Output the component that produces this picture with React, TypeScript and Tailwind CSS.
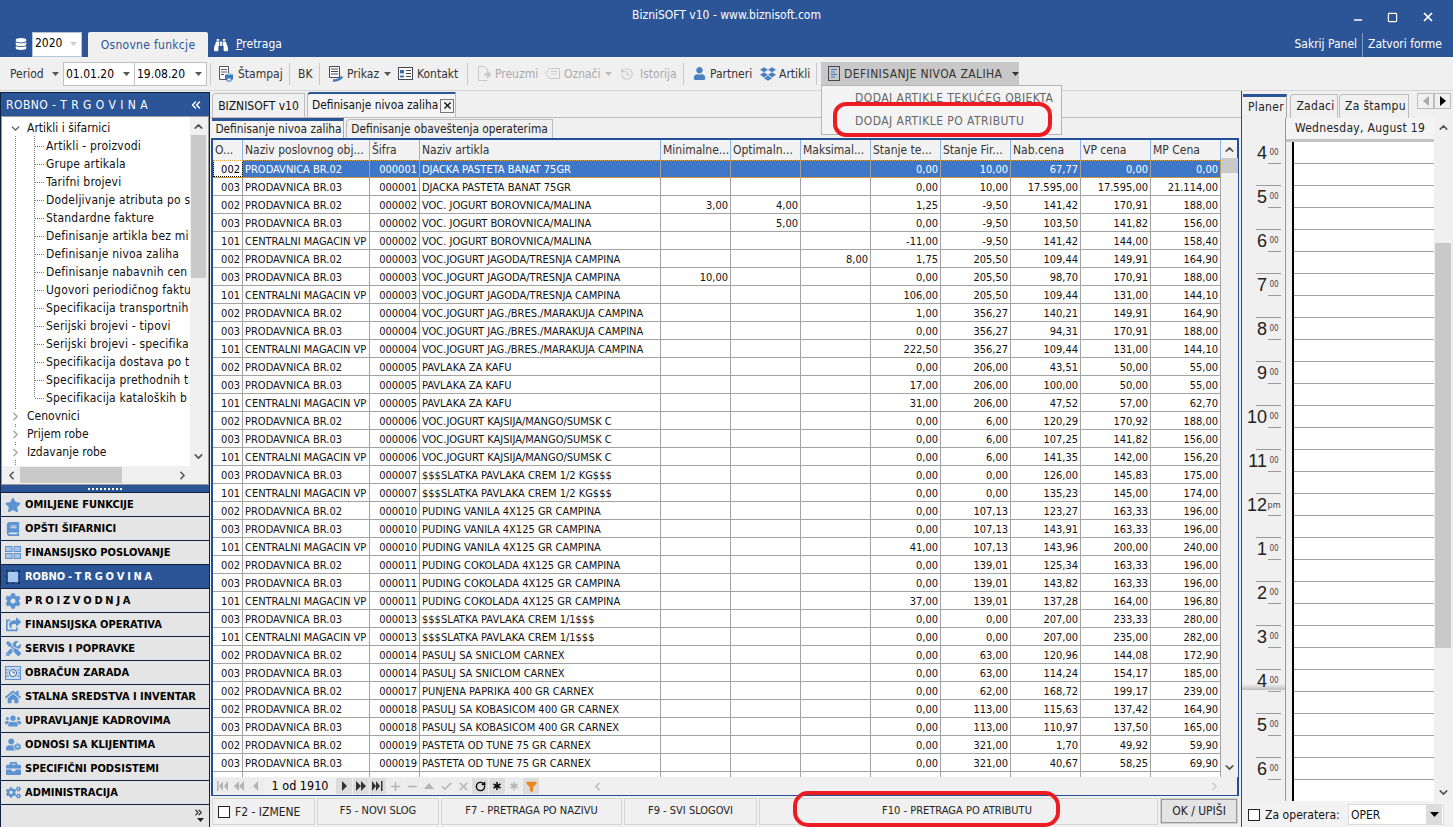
import React from 'react';
import { ChevronDown, ChevronRight, ChevronUp, ChevronLeft, ChevronsLeft, ChevronsRight, Minus, Square, X, History, Plus, Check, RotateCw, Asterisk, Funnel } from 'lucide-react';
import { FaDatabase, FaBinoculars, FaUser, FaDropbox, FaStar, FaBook, FaCog, FaTools, FaHome, FaUsers, FaUserCog, FaBriefcase, FaCogs, FaShareSquare } from 'react-icons/fa';

const W = ['w-[30px]', 'w-[127px]', 'w-[50px]', 'w-[241px]', 'w-[70px]', 'w-[70px]', 'w-[70px]', 'w-[70px]', 'w-[70px]', 'w-[70px]', 'w-[70px]', 'w-[70px]'];
const HEAD = ['O...', 'Naziv poslovnog obj...', 'Šifra', 'Naziv artikla', 'Minimalne...', 'Optimaln...', 'Maksimal...', 'Stanje te...', 'Stanje Fir...', 'Nab.cena', 'VP cena', 'MP Cena'];
const OBJ: Record<string, string> = { '002': 'PRODAVNICA BR.02', '003': 'PRODAVNICA BR.03', '101': 'CENTRALNI MAGACIN VP' };
const A = {
  d: 'DJACKA PASTETA BANAT 75GR', b: 'VOC. JOGURT BOROVNICA/MALINA', j: 'VOC.JOGURT JAGODA/TRESNJA CAMPINA', m: 'VOC.JOGURT JAG./BRES./MARAKUJA CAMPINA',
  p: 'PAVLAKA ZA KAFU', k: 'VOC.JOGURT KAJSIJA/MANGO/SUMSK C', s: '$$$SLATKA PAVLAKA CREM 1/2 KG$$$', v: 'PUDING VANILA 4X125 GR CAMPINA', c: 'PUDING COKOLADA 4X125 GR CAMPINA',
  t: '$$$SLATKA PAVLAKA CREM 1/1$$$', n: 'PASULJ SA SNICLOM CARNEX', r: 'PUNJENA PAPRIKA 400 GR CARNEX', o: 'PASULJ SA KOBASICOM 400 GR CARNEX', u: 'PASTETA OD TUNE 75 GR CARNEX',
};
const ROWS: string[][] = [
  ['002', '000001', A.d, '', '', '', '0,00', '10,00', '67,77', '0,00', '0,00'],
  ['003', '000001', A.d, '', '', '', '0,00', '10,00', '17.595,00', '17.595,00', '21.114,00'],
  ['002', '000002', A.b, '3,00', '4,00', '', '1,25', '-9,50', '141,42', '170,91', '188,00'],
  ['003', '000002', A.b, '', '5,00', '', '0,00', '-9,50', '103,50', '141,82', '156,00'],
  ['101', '000002', A.b, '', '', '', '-11,00', '-9,50', '141,42', '144,00', '158,40'],
  ['002', '000003', A.j, '', '', '8,00', '1,75', '205,50', '109,44', '149,91', '164,90'],
  ['003', '000003', A.j, '10,00', '', '', '0,00', '205,50', '98,70', '170,91', '188,00'],
  ['101', '000003', A.j, '', '', '', '106,00', '205,50', '109,44', '131,00', '144,10'],
  ['002', '000004', A.m, '', '', '', '1,00', '356,27', '140,21', '149,91', '164,90'],
  ['003', '000004', A.m, '', '', '', '0,00', '356,27', '94,31', '170,91', '188,00'],
  ['101', '000004', A.m, '', '', '', '222,50', '356,27', '109,44', '131,00', '144,10'],
  ['002', '000005', A.p, '', '', '', '0,00', '206,00', '43,51', '50,00', '55,00'],
  ['003', '000005', A.p, '', '', '', '17,00', '206,00', '100,00', '50,00', '55,00'],
  ['101', '000005', A.p, '', '', '', '31,00', '206,00', '47,52', '57,00', '62,70'],
  ['002', '000006', A.k, '', '', '', '0,00', '6,00', '120,29', '170,92', '188,00'],
  ['003', '000006', A.k, '', '', '', '0,00', '6,00', '107,25', '141,82', '156,00'],
  ['101', '000006', A.k, '', '', '', '0,00', '6,00', '141,35', '142,00', '156,20'],
  ['003', '000007', A.s, '', '', '', '0,00', '0,00', '126,00', '145,83', '175,00'],
  ['101', '000007', A.s, '', '', '', '0,00', '0,00', '135,23', '145,00', '174,00'],
  ['002', '000010', A.v, '', '', '', '0,00', '107,13', '123,27', '163,33', '196,00'],
  ['003', '000010', A.v, '', '', '', '0,00', '107,13', '143,91', '163,33', '196,00'],
  ['101', '000010', A.v, '', '', '', '41,00', '107,13', '143,96', '200,00', '240,00'],
  ['002', '000011', A.c, '', '', '', '0,00', '139,01', '125,34', '163,33', '196,00'],
  ['003', '000011', A.c, '', '', '', '0,00', '139,01', '143,82', '163,33', '196,00'],
  ['101', '000011', A.c, '', '', '', '37,00', '139,01', '137,28', '164,00', '196,80'],
  ['003', '000013', A.t, '', '', '', '0,00', '0,00', '207,00', '233,33', '280,00'],
  ['101', '000013', A.t, '', '', '', '0,00', '0,00', '207,00', '235,00', '282,00'],
  ['002', '000014', A.n, '', '', '', '0,00', '63,00', '120,96', '144,08', '172,90'],
  ['003', '000014', A.n, '', '', '', '0,00', '63,00', '114,24', '154,17', '185,00'],
  ['002', '000017', A.r, '', '', '', '0,00', '62,00', '168,72', '199,17', '239,00'],
  ['002', '000018', A.o, '', '', '', '0,00', '113,00', '115,63', '137,42', '164,90'],
  ['003', '000018', A.o, '', '', '', '0,00', '113,00', '110,97', '137,50', '165,00'],
  ['002', '000019', A.u, '', '', '', '0,00', '321,00', '1,70', '49,92', '59,90'],
  ['003', '000019', A.u, '', '', '', '0,00', '321,00', '40,67', '58,25', '69,90'],
];

const TREE = ['Artikli - proizvodi', 'Grupe artikala', 'Tarifni brojevi', 'Dodeljivanje atributa po s', 'Standardne fakture', 'Definisanje artikla bez mi', 'Definisanje nivoa zaliha', 'Definisanje nabavnih cen', 'Ugovori periodičnog faktu', 'Specifikacija transportnih', 'Serijski brojevi - tipovi', 'Serijski brojevi - specifika', 'Specifikacija dostava po t', 'Specifikacija prethodnih t', 'Specifikacija kataloških b'];

const BLUE = '#5b93d3';
const GridIcon = () => (
  <svg width="16" height="13" viewBox="0 0 16 13"><g fill="#a9c4e4" stroke="#5b93d3"><rect x=".5" y=".5" width="6.5" height="5" /><rect x="9" y=".5" width="6.5" height="5" /><rect x=".5" y="7.5" width="6.5" height="5" /><rect x="9" y="7.5" width="6.5" height="5" /></g></svg>
);
const PayIcon = () => (
  <svg width="16" height="14" viewBox="0 0 16 14"><rect x=".5" y=".5" width="15" height="13" fill="#c9daf0" stroke="#5b93d3" /><circle cx="8" cy="7" r="3.5" fill="#fff" stroke="#2f5f9e" /><path d="M8 5v2h2" stroke="#2f5f9e" fill="none" /><path d="M1 4h3M1 7h2M1 10h3M12 4h3M13 7h2M12 10h3" stroke="#5b93d3" /></svg>
);
const NAV: [string, React.ReactNode, boolean?][] = [
  ['OMILJENE FUNKCIJE', <FaStar size={16} color={BLUE} />],
  ['OPŠTI ŠIFARNICI', <FaBook size={14} color={BLUE} />],
  ['FINANSIJSKO POSLOVANJE', <GridIcon />],
  ['ROBNO - T R G O V I N A', <div className="w-[14px] h-[14px] border border-dashed border-[#12305f] p-[1px]"><div className="w-full h-full bg-[#a9c8ee]" /></div>, true],
  ['P R O I Z V O D N J A', <FaCog size={16} color={BLUE} />],
  ['FINANSIJSKA OPERATIVA', <FaShareSquare size={15} color={BLUE} />],
  ['SERVIS I POPRAVKE', <FaTools size={15} color={BLUE} />],
  ['OBRAČUN ZARADA', <PayIcon />],
  ['STALNA SREDSTVA I INVENTAR', <FaHome size={16} color={BLUE} />],
  ['UPRAVLJANJE KADROVIMA', <FaUsers size={16} color={BLUE} />],
  ['ODNOSI SA KLIJENTIMA', <FaUserCog size={15} color={BLUE} />],
  ['SPECIFIČNI PODSISTEMI', <FaBriefcase size={15} color={BLUE} />],
  ['ADMINISTRACIJA', <FaCogs size={15} color={BLUE} />],
];

const Sep = () => <div className="w-px h-[22px] bg-[#c8c8c8] shrink-0" />;
const Caret = ({ c = '#555' }: { c?: string }) => <svg width="7" height="4" className="shrink-0"><path d="M0 0h7L3.5 4z" fill={c} /></svg>;

const PrintDoc = () => (
  <svg width="16" height="17" viewBox="0 0 16 17" className="shrink-0"><path d="M1.500 1.500h9v13h-9z" fill="#fff" stroke="#556" /><path d="M3 4.500h6M3 7h6M3 9.500h3" stroke="#556" /><rect x="7" y="9.500" width="8" height="5" fill="#3f78c0" /><rect x="9" y="8" width="4" height="2" fill="#9cc" /><rect x="9" y="13" width="4" height="3" fill="#fff" stroke="#3f78c0" /></svg>
);
const ViewDoc = () => (
  <svg width="15" height="17" viewBox="0 0 15 17" className="shrink-0"><path d="M1.500 1.500h10v11h-10z" fill="#fff" stroke="#445" /><path d="M3 4h7M3 6.500h7M3 9h7" stroke="#445" /><path d="M5 15.500c4 0 7-.5 9-4" fill="none" stroke="#3f78c0" strokeWidth="2.500" /></svg>
);
const Card = () => (
  <svg width="15" height="13" viewBox="0 0 15 13" className="shrink-0"><rect x=".5" y=".5" width="14" height="12" fill="#fff" stroke="#445" /><rect x="2" y="3" width="4" height="3.500" fill="#3f6da8" /><path d="M2 9.500h4" stroke="#3f6da8" strokeWidth="2" /><path d="M8 3.500h5M8 6.500h5M8 9.500h5" stroke="#445" /></svg>
);
const Import = () => (
  <svg width="15" height="17" viewBox="0 0 15 17" className="shrink-0"><path d="M1.500 1.500h6l3 3v2M1.500 1.500v14h9" fill="none" stroke="#c8c8c8" /><path d="M7 9.500h6M10 6.500l3 3-3 3" fill="none" stroke="#c8c8c8" strokeWidth="2" /></svg>
);
const Mark = () => (
  <svg width="15" height="13" viewBox="0 0 15 13" className="shrink-0"><path d="M4.500 1.500h10v10h-10l-4-5z" fill="none" stroke="#c8c8c8" /><path d="M6 4.500h6M6 7h6" stroke="#c8c8c8" /></svg>
);
const ListDoc = () => (
  <svg width="12" height="15" viewBox="0 0 12 15" className="shrink-0"><rect x=".5" y=".5" width="11" height="14" fill="none" stroke="#445" /><path d="M3 3.500h6M3 6h4M3 8.500h6M3 11h4" stroke="#3f78c0" /></svg>
);

const Tri = ({ d, on }: { d: string; on?: boolean }) => (
  <div className={`w-[16px] h-[16px] shrink-0 flex items-center justify-center ${on ? 'bg-[#dcdcdc]' : 'bg-[#ececec]'}`}>
    <svg width="12" height="10" viewBox="0 0 12 10"><path d={d} fill={on ? '#333' : '#b5b5b5'} /></svg>
  </div>
);
const Ico = ({ children, on }: { children: React.ReactNode; on?: boolean }) => (
  <div className={`w-[16px] h-[16px] shrink-0 flex items-center justify-center ${on ? 'bg-[#dcdcdc] text-black' : 'bg-[#ececec] text-[#b5b5b5]'}`}>{children}</div>
);

function Grid() {
  return (
    <div className="flex-1 min-h-0 border-x-2 border-t-2 border-b border-[#1f4f99] flex flex-col text-[11px] text-[#111]">
      <div className="h-[20px] flex shrink-0 bg-[#f2f2f2] text-[12px] text-[#333]">
        {HEAD.map((h, i) => (
          <div key={i} className={`${W[i]} shrink-0 border-r border-[#8fb5e3] px-[2px] leading-[20px] overflow-hidden whitespace-nowrap`}>{h}</div>
        ))}
      </div>
      <div className="h-[617px] flex shrink-0">
        <div className="w-[1008px] shrink-0 overflow-hidden bg-white">
          {ROWS.map((r, idx) => {
            const cells = [r[0], OBJ[r[0]], ...r.slice(1)];
            const sel = idx === 0;
            return (
              <div key={idx} className={`flex h-[18px] border-b ${sel ? 'bg-[#3f77c8] text-white border-[#9a8f70] outline-1 -outline-offset-1 outline-dotted outline-[#d9a441]' : 'border-[#a3a3a3]'}`}>
                {cells.map((c, i) => (
                  <div key={i} className={`${W[i]} shrink-0 border-r ${sel ? 'border-[#a0a0a0]' : 'border-[#a3a3a3]'} px-[2px] leading-[19px] whitespace-nowrap overflow-hidden ${i === 0 || i === 2 || i > 3 ? 'text-right' : ''} ${i === 0 && sel ? 'bg-white text-black outline-1 -outline-offset-1 outline-dotted outline-black' : ''}`}>{c}</div>
                ))}
              </div>
            );
          })}
          <div className="flex h-[6px]">
            {W.map((w, i) => <div key={i} className={`${w} shrink-0 border-r border-[#a3a3a3]`} />)}
          </div>
        </div>
        <div className="w-[17px] shrink-0 bg-[#f0f0f0] flex flex-col items-center">
          <ChevronUp size={13} strokeWidth={3} className="text-[#555] -mt-[17px] mb-[2px]" />
          <div className="w-full h-[15px] bg-[#c9c9c9]" />
          <ChevronDown size={13} strokeWidth={3} className="text-[#555] mt-auto mb-[3px]" />
        </div>
      </div>
      <div className="h-[18px] flex items-center bg-[#f0f0f0] shrink-0 gap-px pl-px text-[#333] overflow-hidden">
        <Tri d="M1 0h1.500v10H1zM7 0v10L3 5zM12 0v10L8 5z" />
        <Tri d="M6 0v10L1 5zM11 0v10L6 5z" />
        <Tri d="M8 0v10L3 5z" />
        <div className="w-[70px] shrink-0 text-center text-[12.5px] leading-[18px] text-black">1 od 1910</div>
        <Tri on d="M4 0v10l5-5z" />
        <Tri on d="M1 0v10l5-5zM6 0v10l5-5z" />
        <Tri on d="M0 0v10l4-5zM4 0v10l4-5zM9 0h1.500v10H9z" />
        <Ico><Plus size={13} strokeWidth={3} /></Ico>
        <Ico><Minus size={13} strokeWidth={3} /></Ico>
        <Tri d="M6 2l5 6H1z" />
        <Ico><Check size={13} strokeWidth={3} /></Ico>
        <Ico><X size={13} strokeWidth={3} /></Ico>
        <Ico on><RotateCw size={11} strokeWidth={3} /></Ico>
        <Ico on><Asterisk size={14} strokeWidth={2.5} /></Ico>
        <Ico><Asterisk size={14} strokeWidth={2.5} /></Ico>
        <Ico on><Funnel size={11} strokeWidth={3} fill="#e8871e" className="text-[#e8871e]" /></Ico>
        <div className="w-[684px] flex justify-between shrink-0 pl-[51px] pr-[3px]">
          <ChevronLeft size={13} strokeWidth={3} className="text-[#bbb]" />
          <ChevronRight size={13} strokeWidth={3} className="text-[#ccc]" />
        </div>
      </div>
    </div>
  );
}

const Btn = ({ w, children, extra = 'justify-center' }: { w: string; children: React.ReactNode; extra?: string }) => (
  <div className={`${w} ${extra} shrink-0 h-[27px] border border-[#d6d6d6] bg-[#f0f0f0] flex items-center text-[#222] text-[11px]`}>{children}</div>
);

function Planner() {
  const hours = ['4', '5', '6', '7', '8', '9', '10', '11', '12', '1', '2', '3', '4', '5', '6'];
  return (
    <div className="w-[212px] shrink-0 border-l border-[#1f4f99] flex flex-col bg-[#f0f0f0] relative">
      <div className="h-[26px] flex items-end shrink-0 pl-[1px] text-[12px] text-[#222] mt-[1px] tracking-[0.3px]">
        <div className="w-[44px] h-[24px] bg-[#f0f0f0] border-t-[3px] border-[#2b5597] border-r border-r-[#a9a9a9] flex items-center justify-center pl-[3px] pb-[1px]">Planer</div>
        <div className="w-[48px] h-[24px] ml-[3px] border border-b-0 border-[#bdbdbd] rounded-tl-[4px] flex items-center justify-center pl-[3px] pb-[1px]">Zadaci</div>
        <div className="w-[70px] h-[24px] ml-[1px] border border-b-0 border-[#bdbdbd] rounded-tl-[4px] flex items-center justify-center pl-[3px] pb-[1px]">Za štampu</div>
        <div className="flex ml-[8px] self-start mt-[1px]">
          <div className="w-[17px] h-[16px] border border-[#bdbdbd] flex items-center justify-center"><svg width="6" height="10"><path d="M6 0v10L0 5z" fill="#aaa" /></svg></div>
          <div className="w-[17px] h-[16px] border border-[#bdbdbd] flex items-center justify-center"><svg width="6" height="10"><path d="M0 0v10l6-5z" fill="#000" /></svg></div>
        </div>
      </div>
      <div className="h-[683px] flex overflow-hidden shrink-0">
        <div className="w-[44px] shrink-0 border-r border-[#9a9a9a] pt-[24px] relative">
          <div className="absolute left-0 right-0 top-[566px] h-[6px] bg-gradient-to-b from-[#f0f0f0] to-[#bdbdbd]" />
          {hours.map((h, i) => (
            <div key={i} className="h-[44px] border-b border-[#9a9a9a] ml-[14px] mr-[4px] relative">
              <div className="h-[21px] flex items-center justify-end relative -ml-[14px] pt-[1px]">
                <span className="text-[18px] leading-[21px] text-[#222] font-['Liberation_Sans',sans-serif]">{h}</span>
                <span className={`w-[14px] ${h === '12' ? 'text-[9px]' : 'text-[8px]'} text-[#445] self-start mt-[5px] text-center leading-[10px]`}>{h === '12' ? 'pm' : '00'}</span>
              </div>
              <div className="h-px bg-[#9a9a9a] ml-[12px]" />
            </div>
          ))}
        </div>
        <div className="w-[148px] shrink-0 flex flex-col">
          <div className="h-[24px] shrink-0 bg-[#f4f4f4] border-b-[3px] border-[#c4c4c4] text-[12px] text-[#222] text-center leading-[21px] tracking-[0.3px]">Wednesday, August 19</div>
          <div className="flex-1 ml-[6px] border-l-2 border-black bg-white overflow-hidden">
            {Array.from({ length: 30 }).map((_, i) => <div key={i} className="h-[22px] border-b border-[#a0a0a0]" />)}
          </div>
        </div>
        <div className="w-[18px] shrink-0 flex flex-col items-center">
          <ChevronUp size={13} strokeWidth={3} className="text-[#555] mt-[3px]" />
          <div className="w-[16px] h-[405px] bg-[#c9c9c9] mt-[109px]" />
          <ChevronDown size={13} strokeWidth={3} className="text-[#555] mt-auto mb-[2px]" />
        </div>
      </div>
      <div className="flex-1 flex items-center pl-[6px] pt-[1px] text-[12px] text-[#111] bg-[#f2f2f2]">
        <div className="w-[12px] h-[12px] border border-[#222] bg-white" />
        <span className="ml-[5px] w-[83px] tracking-[0.05px]">Za operatera:</span>
        <div className="w-[96px] h-[21px] border border-[#ddd] bg-white flex items-center justify-between pl-[2px] pr-px">
          OPER
          <div className="w-[16px] h-[19px] bg-[#dcdcdc] flex items-center justify-center"><svg width="9" height="5"><path d="M0 0h9L4.500 5z" fill="#000" /></svg></div>
        </div>
      </div>
    </div>
  );
}

export default function App() {
  return (
    <div className="w-[1453px] h-[827px] overflow-hidden relative flex flex-col bg-[#f0f0f0] font-['DejaVu_Sans_Condensed','DejaVu_Sans',sans-serif] [font-stretch:condensed] text-[12px]">
      {/* Title */}
      <div className="h-[30px] shrink-0 bg-[#2b5597] text-white flex items-center">
        <div className="flex-1" />
        <div className="text-[12px]">BizniSOFT v10 - www.biznisoft.com</div>
        <div className="flex-1 relative h-full">
          <div className="absolute right-[18px] top-[8px] flex items-center gap-[23px]">
            <Minus size={12} strokeWidth={3} className="mt-[6px]" />
            <Square size={11} strokeWidth={2.5} />
            <X size={14} strokeWidth={3} />
          </div>
        </div>
      </div>
      {/* Ribbon tabs */}
      <div className="h-[27px] shrink-0 bg-[#2b5597] flex items-end text-white">
        <FaDatabase size={12} className="ml-[15px] mb-[7px]" />
        <div className="ml-[5px] w-[50px] h-[25px] self-start mt-[2px] bg-white border border-[#b5c5da] text-black pl-[2px] pr-[4px] leading-[20px] text-[12px] flex justify-between">2020<span className="pt-[9px]"><Caret c="#ccc" /></span></div>
        <div className="ml-[6px] w-[120px] h-[25px] bg-[#f0f0f0] text-[#2b5597] flex items-center justify-center rounded-t-[2px] tracking-[0.3px]">Osnovne funkcje</div>
        <FaBinoculars size={14} className="ml-[6px] mb-[5px]" />
        <div className="ml-[8px] mb-[4px]"><u>P</u>retraga</div>
        <div className="flex-1" />
        <div className="mb-[4px]">Sakrij Panel</div>
        <div className="w-px h-[24px] bg-[#7f9cc7] mx-[5px]" />
        <div className="mb-[4px] mr-[11px]">Zatvori forme</div>
      </div>
      {/* Toolbar */}
      <div className="h-[34px] shrink-0 border-b border-[#d4d4d4] bg-[#f0f0f0] flex items-center pl-[10px] text-[#333] whitespace-nowrap">
        <span className="w-[34px]">Period</span>
        <span className="ml-[8px]"><Caret /></span>
        <div className="ml-[4px] flex w-[144px] h-[24px] border border-[#c0c0c0] bg-white text-black">
          <div className="w-[71px] flex items-center justify-between pl-[2px] pr-[4px] border-r border-[#c0c0c0]">01.01.20<Caret /></div>
          <div className="flex-1 flex items-center justify-between pl-[2px] pr-[4px]">19.08.20<Caret /></div>
        </div>
        <div className="w-[3px] shrink-0" /><Sep />
        <span className="ml-[7px]"><PrintDoc /></span>
        <span className="ml-[4px] w-[45px]">Štampaj</span>
        <div className="w-[6px]" /><Sep />
        <span className="ml-[8px] w-[14px]">BK</span>
        <div className="w-[7px]" /><Sep />
        <span className="ml-[8px]"><ViewDoc /></span>
        <span className="ml-[4px] w-[30px]">Prikaz</span>
        <span className="ml-[7px]"><Caret /></span>
        <span className="ml-[7px]"><Card /></span>
        <span className="ml-[4px] w-[44px]">Kontakt</span>
        <div className="w-[6px]" /><Sep />
        <span className="ml-[9px]"><Import /></span>
        <span className="ml-[3px] w-[43px] text-[#aaa]">Preuzmi</span>
        <span className="ml-[7px]"><Mark /></span>
        <span className="ml-[4px] w-[36px] text-[#aaa]">Označi</span>
        <span className="ml-[5px]"><Caret c="#bbb" /></span>
        <History size={14} className="ml-[8px] text-[#c8c8c8]" />
        <span className="ml-[6px] w-[36px] text-[#aaa]">Istorija</span>
        <div className="w-[7px]" /><Sep />
        <FaUser size={13} className="ml-[9px] text-[#4a7fc0]" />
        <span className="ml-[4px] w-[42px]">Partneri</span>
        <FaDropbox size={16} className="ml-[8px] text-[#4a7fc0]" />
        <span className="ml-[3px] w-[30px]">Artikli</span>
        <div className="w-[7px]" /><Sep />
        <div className="ml-[4px] w-[198px] h-[24px] bg-[#c8c8c8] flex items-center pl-[7px] text-[#333]">
          <ListDoc />
          <span className="ml-[4px] w-[159px] text-[12px] tracking-[0.4px]">DEFINISANJE NIVOA ZALIHA</span>
          <span className="ml-[9px]"><Caret c="#333" /></span>
        </div>
      </div>
      {/* Body */}
      <div className="flex-1 min-h-0 flex">
        {/* Left */}
        <div className="w-[210px] shrink-0 mt-px border-t border-l border-r border-[#10213f] flex flex-col bg-[#e5e5e5]">
          <div className="h-[23px] shrink-0 bg-[#2b5597] text-white flex items-center justify-between pl-[5px] pr-[6px] text-[12px] tracking-[0.45px]">
            ROBNO - T R G O V I N A
            <ChevronsLeft size={14} strokeWidth={2.5} />
          </div>
          <div className="h-[369px] shrink-0 border border-[#9a9a9a] flex flex-col bg-[#f0f0f0] overflow-hidden">
            <div className="h-[349px] flex shrink-0">
              <div className="w-[188px] bg-white overflow-hidden shrink-0 relative text-[12px] text-[#111] whitespace-nowrap pt-[2px]">
                <div className="absolute left-[13px] top-[19px] h-[335px] border-l border-dotted border-[#777]" />
                <div className="absolute left-[32px] top-[19px] h-[261px] border-l border-dotted border-[#777]" />
                <div className="h-[18px] flex items-center">
                  <ChevronDown size={13} strokeWidth={2.5} className="ml-[7px] text-[#555] shrink-0" />
                  <span className="ml-[5px]">Artikli i šifarnici</span>
                </div>
                {TREE.map((t) => (
                  <div key={t} className="h-[18px] flex items-center">
                    <div className="ml-[33px] w-[9px] border-t border-dotted border-[#777] shrink-0" />
                    <span className="ml-[2px] tracking-[0.2px]">{t}</span>
                  </div>
                ))}
                {['Cenovnici', 'Prijem robe', 'Izdavanje robe'].map((t) => (
                  <div key={t} className="h-[18px] flex items-center relative">
                    <ChevronRight size={13} strokeWidth={3} className="ml-[7px] text-[#aaa] shrink-0 bg-white z-10" />
                    <span className="ml-[5px]">{t}</span>
                  </div>
                ))}
              </div>
              <div className="w-[16px] shrink-0 flex flex-col items-center">
                <ChevronUp size={13} strokeWidth={3} className="text-[#555] mt-[3px]" />
                <div className="w-[15px] h-[143px] bg-[#c9c9c9] mt-[2px]" />
                <ChevronDown size={13} strokeWidth={3} className="text-[#555] mt-auto mb-[3px]" />
              </div>
            </div>
            <div className="h-[18px] flex items-center shrink-0 w-[188px]">
              <ChevronLeft size={13} strokeWidth={3} className="text-[#555] ml-[3px] shrink-0" />
              <div className="w-[102px] h-[16px] bg-[#c9c9c9] ml-[2px] shrink-0" />
              <ChevronRight size={13} strokeWidth={3} className="text-[#555] ml-auto mr-[1px] shrink-0" />
            </div>
          </div>
          <div className="h-[7px] shrink-0 bg-[#2b5597] flex items-center justify-center gap-[2px]">
            {Array.from({ length: 9 }).map((_, i) => <div key={i} className="w-[2px] h-[2px] bg-white" />)}
          </div>
          {NAV.map(([label, icon, active]) => (
            <div key={label} className={`h-[24px] shrink-0 border-t border-[#10213f] flex items-center ${active ? 'bg-[#2b5597] text-white' : 'text-black'}`}>
              <div className="w-[24px] shrink-0 flex justify-center">{icon}</div>
              <span className={`text-[11px] font-bold whitespace-nowrap pt-[1px] ${label.includes(' R ') ? '[word-spacing:-0.7px]' : ''}`}>{label}</span>
            </div>
          ))}
          <div className="flex-1 border-t border-[#10213f] flex flex-col items-end pr-[5px] pt-[2px]">
            <ChevronsRight size={11} strokeWidth={2.5} className="text-[#222]" />
            <Caret c="#222" />
          </div>
        </div>
        {/* Main */}
        <div className="flex-1 min-w-0 flex flex-col">
          <div className="h-[26px] shrink-0 flex items-end pl-[2px] text-[12px] text-[#111]">
            <div className="w-[93px] h-[24px] pt-[1px] border border-b-0 border-[#bdbdbd] rounded-tl-[4px] flex items-center justify-center">BIZNISOFT v10</div>
            <div className="w-[149px] h-[25px] ml-[2px] bg-[#f4f4f4] border border-b-0 border-[#bdbdbd] border-t-[#2b5597] border-t-2 rounded-tl-[4px] flex items-center pl-[4px] whitespace-nowrap">
              <span className="text-[11.8px] pt-[1px]">Definisanje nivoa zaliha</span>
              <div className="ml-[2px] w-[14px] h-[14px] border border-[#777] shrink-0 flex items-center justify-center"><X size={11} strokeWidth={2.5} className="text-black" /></div>
            </div>
          </div>
          <div className="h-[21px] shrink-0 flex items-end pl-[2px] text-[11.8px] text-[#222] border-t border-[#bdbdbd] whitespace-nowrap">
            <div className="w-[132px] h-[20px] bg-[#f4f4f4] border-t-[3px] border-[#2b5597] border-r border-r-[#a9a9a9] flex items-center justify-center pt-[1px] pl-[2px]">Definisanje nivoa zaliha</div>
            <div className="w-[207px] h-[19px] ml-[2px] border border-b-0 border-[#bdbdbd] rounded-tl-[4px] flex items-center justify-center pt-[1px]">Definisanje obaveštenja operaterima</div>
          </div>
          <div className="h-[658px] shrink-0 flex flex-col mr-[2px] ml-[1px]"><Grid /></div>
          <div className="flex-1 flex items-start pt-[2px] pl-[2px] gap-[2px]">
            <Btn w="w-[103px]" extra="pl-[5px]"><div className="w-[12px] h-[12px] border border-[#222] bg-white mr-[5px] shrink-0" /><span className="text-[12px] whitespace-nowrap">F2 - IZMENE</span></Btn>
            <Btn w="w-[122px]">F5 - NOVI SLOG</Btn>
            <Btn w="w-[181px]">F7 - PRETRAGA PO NAZIVU</Btn>
            <Btn w="w-[133px]">F9 - SVI SLOGOVI</Btn>
            <Btn w="w-[399px]" extra="justify-center pr-[3px]">F10 - PRETRAGA PO ATRIBUTU</Btn>
            <div className="w-[78px] h-[26px] border-2 border-[#cfcfcf] bg-[#e4e4e4] outline-1 outline-[#999] -outline-offset-2 flex items-center justify-center text-[12px] text-[#222]">OK / UPIŠI</div>
          </div>
        </div>
        <Planner />
      </div>
      {/* Dropdown menu */}
      <div className="absolute left-[821px] top-[85px] w-[241px] h-[50px] bg-[#f4f4f4] border border-[#b5b5b5] text-[12px] tracking-[0.45px] text-[#666] pl-[33px] whitespace-nowrap">
        <div className="h-[24px] leading-[25px]">DODAJ ARTIKLE TEKUĆEG OBJEKTA</div>
        <div className="h-[24px] leading-[23px]">DODAJ ARTIKLE PO ATRIBUTU</div>
      </div>
      {/* Red annotations */}
      <svg className="absolute left-0 top-0 pointer-events-none" width="1453" height="827">
        <rect x="835" y="104" width="215" height="31" rx="11" fill="none" stroke="#ed1c24" strokeWidth="4" />
        <rect x="795" y="793" width="263" height="32" rx="13" fill="none" stroke="#ed1c24" strokeWidth="4" />
      </svg>
    </div>
  );
}
